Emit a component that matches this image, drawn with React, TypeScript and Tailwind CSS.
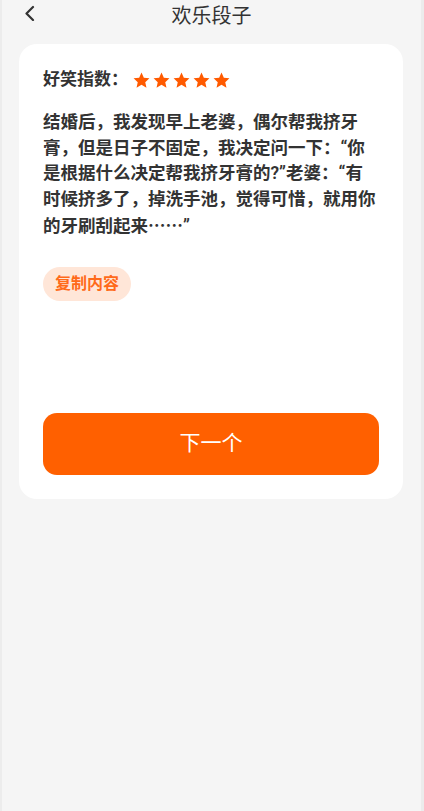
export default function App() {
  return (
    <div
      className="min-h-[811px] w-[424px] border-l-2 border-r-[3px] border-[#ececec] bg-[#f5f5f5] text-[#333]"
      style={{ fontFamily: 'Roboto, "Noto Sans CJK SC", sans-serif' }}
    >
      <header className="relative flex h-[30px] items-center justify-center">
        <button className="absolute left-[19px] top-[3px] p-0.5 text-[#333]" aria-label="返回">
          <svg width="14" height="16" viewBox="0 0 14 16" fill="none">
            <path d="M10 2L3.5 8.5L10 15" stroke="currentColor" strokeWidth="2.2" strokeLinecap="round" strokeLinejoin="round" />
          </svg>
        </button>
        <h1 className="pt-[2px] text-[20px] font-normal leading-none">欢乐段子</h1>
      </header>

      <JokeCard />
    </div>
  )
}

function JokeCard() {
  return (
    <section className="ml-[17px] mt-[14px] w-[384px] rounded-[18px] bg-white px-6 pb-6 pt-6">
      <div className="flex h-6 items-center">
        <span className="text-[17px] font-semibold">好笑指数：</span>
        <div className="ml-[5px] flex gap-[3px]">
          {[0, 1, 2, 3, 4].map((i) => (
            <Star key={i} />
          ))}
        </div>
      </div>

      <p className="mt-[18px] text-[17.5px] font-semibold leading-[25.5px]">
        结婚后，我发现早上老婆，偶尔帮我挤牙膏，但是日子不固定，我决定问一下：“你是根据什么决定帮我挤牙膏的?”老婆：“有时候挤多了，掉洗手池，觉得可惜，就用你的牙刷刮起来
        <span style={{ fontFamily: '"Noto Sans CJK SC", sans-serif' }}>……</span>”
      </p>

      <button className="mt-[27px] flex h-[34px] items-center rounded-full bg-[#ffe6d8] px-3 text-[16px] font-semibold text-[#ff6a1a]">
        复制内容
      </button>

      <button className="mt-[112px] flex h-[62px] w-full items-center justify-center rounded-[14px] bg-[#ff6000] text-[21px] font-normal text-white">
        下一个
      </button>
    </section>
  )
}

function Star() {
  return (
    <svg width="17" height="17" viewBox="0 0 24 24" fill="#ff5a00">
      <path d="M12 0.8l3.3 7.3 7.9.8-5.9 5.4 1.7 7.8L12 18.1l-7 4 1.7-7.8L0.8 8.9l7.9-.8z" />
    </svg>
  )
}
